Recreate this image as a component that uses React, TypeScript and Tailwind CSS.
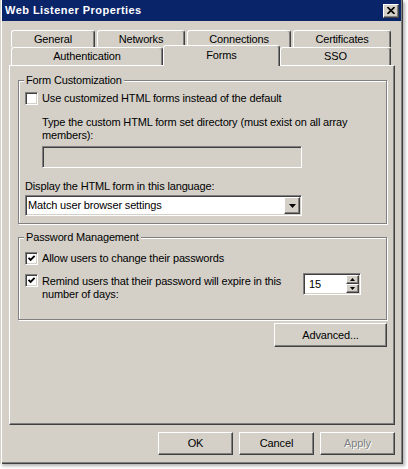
const raised =
  "border border-t-white border-l-white border-r-[#404040] border-b-[#404040] shadow-[inset_-1px_-1px_0_#808080]";
const sunken =
  "border border-t-[#808080] border-l-[#808080] border-r-white border-b-white shadow-[inset_1px_1px_0_#404040,inset_-1px_-1px_0_#d4d0c8]";
const tab =
  "flex items-center justify-center rounded-t-[3px] border-l border-t border-r border-l-white border-t-white border-r-[#404040] bg-[#d4d0c8] shadow-[inset_-1px_0_0_#808080]";
const group =
  "min-w-0 border border-[#808080] pl-[6px] shadow-[inset_1px_1px_0_#fff,1px_1px_0_#fff]";

function Checkbox({ checked }: { checked?: boolean }) {
  return (
    <span className={`flex h-[13px] w-[13px] shrink-0 items-center justify-center bg-white ${sunken}`}>
      {checked && (
        <svg width="9" height="9" viewBox="0 0 9 9">
          <path d="M1.5 3.8 L3.6 5.9 L7.6 1.9" fill="none" stroke="#000" strokeWidth="1.9" />
        </svg>
      )}
    </span>
  );
}

function Button({
  children,
  disabled,
  className = "h-[23px] w-[75px]",
}: {
  children: React.ReactNode;
  disabled?: boolean;
  className?: string;
}) {
  return (
    <div className={`flex items-center justify-center bg-[#d4d0c8] ${raised} ${className}`}>
      <span className={disabled ? "text-[#808080] [text-shadow:1px_1px_0_#fff]" : "text-black"}>{children}</span>
    </div>
  );
}

function Arrow({ up, w = 7, h = 4 }: { up?: boolean; w?: number; h?: number }) {
  return (
    <svg width={w} height={h} viewBox={`0 0 ${w} ${h}`}>
      <path d={up ? `M0 ${h} L${w / 2} 0 L${w} ${h} Z` : `M0 0 L${w} 0 L${w / 2} ${h} Z`} fill="#000" />
    </svg>
  );
}

export default function App() {
  return (
    <div className="h-[469px] w-[408px] bg-white font-['Liberation_Sans',Arial,sans-serif] text-[11px] leading-[13px] tracking-[-0.15px] text-black">
      <div className="h-[464px] w-[403px] bg-[#d4d0c8] px-[2px] shadow-[inset_1px_0_0_#d4d0c8,inset_2px_0_0_#fff,inset_-1px_-1px_0_#404040,inset_-2px_-2px_0_#808080,2px_2px_3px_rgba(0,0,0,0.3)]">
        {/* Title bar */}
        <div className="flex h-[21px] items-center justify-between bg-[#0a246a] pl-[3px] pr-[2px]">
          <span className="text-[11px] font-bold tracking-[0.45px] text-white">Web Listener Properties</span>
          <div className={`flex h-[14px] w-[16px] items-center justify-center bg-[#d4d0c8] ${raised}`}>
            <svg width="8" height="7" viewBox="0 0 8 7">
              <path d="M0.5 0 L7.5 7 M7.5 0 L0.5 7" stroke="#000" strokeWidth="1.6" />
            </svg>
          </div>
        </div>

        <div className="pl-[7px] pt-[9px]">
          {/* Tabs */}
          <div className="w-[386px] pl-[2px]">
            <div className="flex h-[17px] gap-[2px]">
              <div className={`${tab} w-[84px]`}>General</div>
              <div className={`${tab} w-[88px]`}>Networks</div>
              <div className={`${tab} w-[104px]`}>Connections</div>
              <div className={`${tab} w-[98px]`}>Certificates</div>
            </div>
            <div className="flex h-[18px] items-start">
              <div className={`${tab} h-[18px] w-[152px]`}>Authentication</div>
              <div className={`${tab} relative z-10 -mt-[2px] h-[21px] w-[117px] pb-[2px]`}>Forms</div>
              <div className={`${tab} h-[18px] w-[111px]`}>SSO</div>
            </div>
          </div>

          {/* Tab page */}
          <div className={`flex h-[360px] w-[386px] flex-col pl-[8px] pr-[7px] pt-[8px] ${raised}`}>
            <fieldset className={`${group} pb-[7px]`}>
              <legend className="-ml-[1px] bg-[#d4d0c8] px-[2px] leading-[13px]">Form Customization</legend>
              <div className="mt-[5px] flex items-center gap-[4px]">
                <Checkbox />
                <span>Use customized HTML forms instead of the default</span>
              </div>
              <div className="mt-[11px] pl-[17px]">
                Type the custom HTML form set directory (must exist on all array
                <br />
                members):
              </div>
              <div className={`ml-[17px] mt-[4px] h-[22px] w-[260px] bg-[#d4d0c8] ${sunken}`} />
              <div className="mt-[12px]">Display the HTML form in this language:</div>
              <div className={`mt-[2px] flex h-[21px] w-[277px] bg-white p-[1px] ${sunken}`}>
                <span className="flex-1 self-center pl-[1px]">Match user browser settings</span>
                <div className={`flex h-full w-[16px] items-center justify-center bg-[#d4d0c8] ${raised}`}>
                  <Arrow />
                </div>
              </div>
            </fieldset>

            <fieldset className={`${group} mt-[7px] pb-[18px]`}>
              <legend className="-ml-[1px] bg-[#d4d0c8] px-[2px] leading-[13px]">Password Management</legend>
              <div className="mt-[8px] flex items-center gap-[4px]">
                <Checkbox checked />
                <span>Allow users to change their passwords</span>
              </div>
              <div className="mt-[9px] flex items-start">
                <Checkbox checked />
                <div className="ml-[4px] mt-[1px] w-[261px]">
                  Remind users that their password will expire in this
                  <br />
                  number of days:
                </div>
                <div className={`-mt-[1px] flex h-[22px] w-[58px] bg-white p-[1px] ${sunken}`}>
                  <span className="flex-1 self-center pl-[4px]">15</span>
                  <div className="flex w-[13px] flex-col">
                    <div className={`flex h-[9px] items-center justify-center bg-[#d4d0c8] ${raised}`}>
                      <Arrow up w={5} h={3} />
                    </div>
                    <div className={`flex h-[9px] items-center justify-center bg-[#d4d0c8] ${raised}`}>
                      <Arrow w={5} h={3} />
                    </div>
                  </div>
                </div>
              </div>
            </fieldset>

            <div className="mt-[3px] flex justify-end">
              <Button className="h-[24px] w-[113px]">Advanced...</Button>
            </div>
          </div>

          {/* Dialog buttons */}
          <div className="mt-[7px] flex w-[386px] justify-end gap-[6px]">
            <Button>OK</Button>
            <Button>Cancel</Button>
            <Button disabled>Apply</Button>
          </div>
        </div>
      </div>
    </div>
  );
}
